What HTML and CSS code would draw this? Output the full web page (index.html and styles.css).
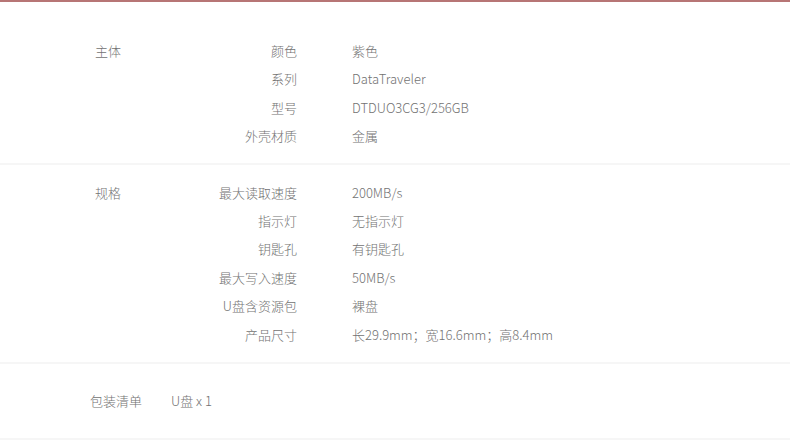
FILE: index.html
```html
<!DOCTYPE html>
<html lang="zh-CN">
<head>
<meta charset="utf-8">
<link rel="stylesheet" href="styles.css">
</head>
<body>
<div class="page">
  <section class="group">
    <div class="group-name">主体</div>
    <dl class="specs">
      <dt>颜色</dt><dd>紫色</dd>
      <dt>系列</dt><dd>DataTraveler</dd>
      <dt>型号</dt><dd>DTDUO3CG3/256GB</dd>
      <dt>外壳材质</dt><dd>金属</dd>
    </dl>
  </section>
  <section class="group group-2">
    <div class="group-name">规格</div>
    <dl class="specs">
      <dt>最大读取速度</dt><dd>200MB/s</dd>
      <dt>指示灯</dt><dd>无指示灯</dd>
      <dt>钥匙孔</dt><dd>有钥匙孔</dd>
      <dt>最大写入速度</dt><dd>50MB/s</dd>
      <dt>U盘含资源包</dt><dd>裸盘</dd>
      <dt>产品尺寸</dt><dd>长29.9mm；宽16.6mm；高8.4mm</dd>
    </dl>
  </section>
  <section class="package">
    <div class="package-name">包装清单</div>
    <div class="package-value">U盘 x 1</div>
  </section>
</div>
</body>
</html>
```

FILE: styles.css
```css
html, body {
  margin: 0;
  padding: 0;
  background: #ffffff;
}
body {
  font-family: "Noto Sans CJK SC", "Noto Sans", sans-serif;
  font-size: 13px;
  color: #727272;
  font-weight: 300;
}
.page {
  border-top: 2px solid #b77575;
}
.group {
  display: grid;
  grid-template-columns: 105px 1fr;
  padding: 35px 0 12px 95px;
  border-bottom: 2px solid #f6f6f6;
}
.group-2 {
  padding-top: 14px;
  padding-bottom: 13px;
}
.group-name {
  line-height: 28.4px;
}
.specs {
  margin: 0;
  display: grid;
  grid-template-columns: 97px 1fr;
  column-gap: 55px;
  line-height: 28.4px;
}
.specs dt {
  text-align: right;
  white-space: nowrap;
}
.specs dd {
  margin: 0;
  white-space: nowrap;
}
.package {
  display: flex;
  padding: 23px 0 23px 90px;
  line-height: 28.4px;
  border-bottom: 2px solid #f6f6f6;
}
.package-name {
  width: 81px;
}
```
